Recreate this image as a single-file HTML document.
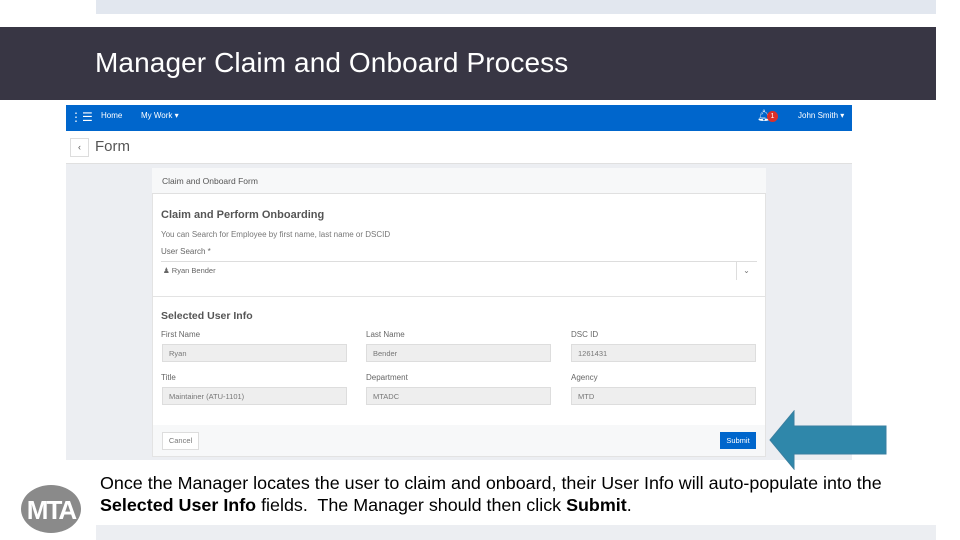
<!DOCTYPE html>
<html><head><style>
body{margin:0;width:960px;height:540px;position:relative;background:#fff;font-family:"Liberation Sans",sans-serif;overflow:hidden}
div,span{position:absolute;box-sizing:border-box}
.l{font-size:8px;color:#666}
.f{height:18px;background:#eeeeee;border:1px solid #ddd;font-size:7.5px;color:#777;padding:4px 6px}
</style></head><body>
<div style="left:96px;top:0;width:840px;height:14px;background:#e2e7ef"></div>
<div style="left:0;top:27px;width:936px;height:73px;background:#383644"></div>
<div style="left:95px;top:47px;font-size:28px;color:#fff;letter-spacing:0.1px">Manager Claim and Onboard Process</div>

<div style="left:66px;top:105px;width:786px;height:355px;background:#eceef2"></div>
<div style="left:66px;top:105px;width:786px;height:26px;background:#0066cc"></div>
<div style="left:70px;top:110px;color:#fff;font-size:12px">&#8942;&#9776;</div>
<div style="left:101px;top:111px;color:#fff;font-size:8px">Home</div>
<div style="left:141px;top:111px;color:#fff;font-size:8px">My Work ▾</div>
<div style="left:757px;top:109px;color:#fff;font-size:11px">🔔︎</div>
<div style="left:767px;top:111px;width:11px;height:11px;border-radius:50%;background:#d9302a;color:#fff;font-size:7px;text-align:center;line-height:11px">1</div>
<div style="left:798px;top:111px;color:#fff;font-size:8px">John Smith ▾</div>
<div style="left:66px;top:131px;width:786px;height:33px;background:#fff;border-bottom:1px solid #e0e0e0"></div>
<div style="left:70px;top:138px;width:19px;height:19px;border:1px solid #ddd;font-size:9px;text-align:center;line-height:17px;color:#555">‹</div>
<div style="left:95px;top:138px;font-size:15px;color:#555">Form</div>

<div style="left:152px;top:168px;width:614px;height:289px;background:#fff;border:1px solid #e3e3e3"></div>
<div style="left:152px;top:168px;width:614px;height:26px;background:#f7f8f9;border-bottom:1px solid #e0e0e0"></div>
<div style="left:162px;top:176px;font-size:8.5px;color:#555">Claim and Onboard Form</div>
<div style="left:161px;top:209px;font-size:11px;color:#555;font-weight:bold">Claim and Perform Onboarding</div>
<div style="left:161px;top:230px;font-size:8px;color:#777">You can Search for Employee by first name, last name or DSCID</div>
<div style="left:161px;top:247px;font-size:8px;color:#666">User Search *</div>
<div style="left:161px;top:261px;width:596px;height:20px;border-top:1px solid #ddd"></div>
<div style="left:736px;top:262px;width:20px;height:18px;border-left:1px solid #ddd;font-size:8px;color:#777;text-align:center;line-height:18px">⌄</div>
<div style="left:163px;top:266px;font-size:7.5px;color:#666">&#9823; Ryan Bender</div>
<div style="left:152px;top:296px;width:614px;border-top:1px solid #e3e3e3"></div>
<div style="left:161px;top:310px;font-size:10.5px;color:#555;font-weight:bold">Selected User Info</div>
<div class="l" style="left:161px;top:330px">First Name</div>
<div class="l" style="left:366px;top:330px">Last Name</div>
<div class="l" style="left:571px;top:330px">DSC ID</div>
<div class="f" style="left:162px;top:344px;width:185px">Ryan</div>
<div class="f" style="left:366px;top:344px;width:185px">Bender</div>
<div class="f" style="left:571px;top:344px;width:185px">1261431</div>
<div class="l" style="left:161px;top:373px">Title</div>
<div class="l" style="left:366px;top:373px">Department</div>
<div class="l" style="left:571px;top:373px">Agency</div>
<div class="f" style="left:162px;top:387px;width:185px">Maintainer (ATU-1101)</div>
<div class="f" style="left:366px;top:387px;width:185px">MTADC</div>
<div class="f" style="left:571px;top:387px;width:185px">MTD</div>
<div style="left:153px;top:425px;width:612px;height:31px;background:#f7f8f9"></div>
<div style="left:162px;top:432px;width:37px;height:18px;background:#fff;border:1px solid #ddd;font-size:7.5px;color:#777;text-align:center;line-height:16px">Cancel</div>
<div style="left:720px;top:432px;width:36px;height:17px;background:#0066cc;font-size:7.5px;color:#fff;text-align:center;line-height:17px">Submit</div>

<svg style="position:absolute;left:768px;top:410px" width="120" height="60"><polygon points="2,30 26,1 26,16 118,16 118,44 26,44 26,59" fill="#2f87aa" stroke="#3a7fa0" stroke-width="1"/></svg>

<svg style="position:absolute;left:20px;top:484px" width="62" height="50"><ellipse cx="31" cy="25" rx="30" ry="24" fill="#8a8a8a"/><text x="31" y="35" font-family="Liberation Sans" font-weight="bold" font-size="26" fill="#fff" text-anchor="middle" letter-spacing="-2">MTA</text></svg>
<div style="left:100px;top:472px;font-size:17.9px;color:#000;line-height:22px;width:860px;white-space:nowrap">Once the Manager locates the user to claim and onboard, their User Info will auto-populate into the<br><b>Selected User Info</b> fields.&nbsp; The Manager should then click <b>Submit</b>.</div>
<div style="left:96px;top:525px;width:840px;height:15px;background:#eceef2"></div>
</body></html>
